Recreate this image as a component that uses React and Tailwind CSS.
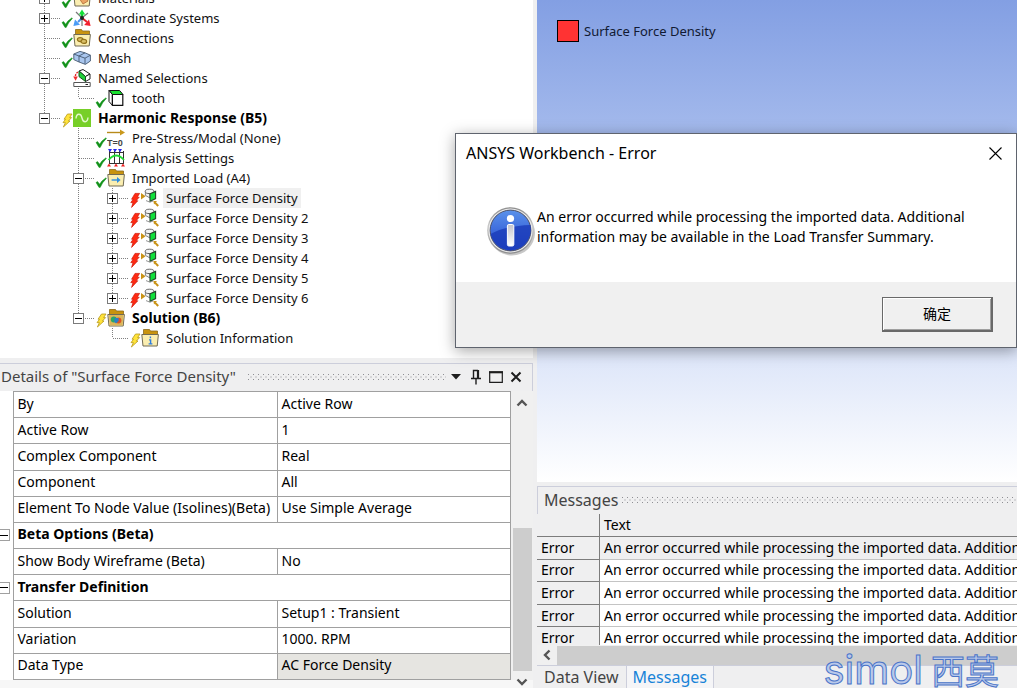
import { useState } from 'react';

const TREE = [
  { label: 'Materials', level: 0, icon: 'materials', status: 'ok', box: '+', guides: ['full'] },
  { label: 'Coordinate Systems', level: 0, icon: 'axes', status: 'ok', box: '+', guides: ['full'] },
  { label: 'Connections', level: 0, icon: 'connections', status: 'ok', guides: ['full'] },
  { label: 'Mesh', level: 0, icon: 'mesh', status: 'ok', guides: ['full'] },
  { label: 'Named Selections', level: 0, icon: 'named', box: '-', guides: ['full'] },
  { label: 'tooth', level: 1, icon: 'cube', status: 'ok', guides: ['line', 'end'] },
  { label: 'Harmonic Response (B5)', level: 0, icon: 'harmonic', status: 'bolt', box: '-', bold: true, guides: ['end'] },
  { label: 'Pre-Stress/Modal (None)', level: 1, icon: 'prestress', status: 'ok', guides: ['none', 'full'] },
  { label: 'Analysis Settings', level: 1, icon: 'settings', status: 'ok', guides: ['none', 'full'] },
  { label: 'Imported Load (A4)', level: 1, icon: 'imported', status: 'ok', box: '-', guides: ['none', 'full'] },
  { label: 'Surface Force Density', level: 2, icon: 'force', status: 'fail', box: '+', guides: ['none', 'line', 'full'] },
  { label: 'Surface Force Density 2', level: 2, icon: 'force', status: 'fail', box: '+', guides: ['none', 'line', 'full'] },
  { label: 'Surface Force Density 3', level: 2, icon: 'force', status: 'fail', box: '+', guides: ['none', 'line', 'full'] },
  { label: 'Surface Force Density 4', level: 2, icon: 'force', status: 'fail', box: '+', guides: ['none', 'line', 'full'] },
  { label: 'Surface Force Density 5', level: 2, icon: 'force', status: 'fail', box: '+', guides: ['none', 'line', 'full'] },
  { label: 'Surface Force Density 6', level: 2, icon: 'force', status: 'fail', box: '+', guides: ['none', 'line', 'end'] },
  { label: 'Solution (B6)', level: 1, icon: 'solution', status: 'bolt', box: '-', bold: true, guides: ['none', 'end'] },
  { label: 'Solution Information', level: 2, icon: 'info', status: 'bolt', guides: ['none', 'none', 'end'] },
];

const DETAILS = [
  { name: 'By', value: 'Active Row' },
  { name: 'Active Row', value: '1' },
  { name: 'Complex Component', value: 'Real' },
  { name: 'Component', value: 'All' },
  { name: 'Element To Node Value (Isolines)(Beta)', value: 'Use Simple Average' },
  { group: 'Beta Options (Beta)' },
  { name: 'Show Body Wireframe (Beta)', value: 'No' },
  { group: 'Transfer Definition' },
  { name: 'Solution', value: 'Setup1 : Transient' },
  { name: 'Variation', value: '1000. RPM' },
  { name: 'Data Type', value: 'AC Force Density', locked: true },
];

const MESSAGES = Array.from({ length: 5 }, () => ({
  kind: 'Error',
  text: 'An error occurred while processing the imported data. Additional information may be available in the Load Transfer Summary.',
}));

export default function App() {
  const [selected, setSelected] = useState('Surface Force Density');
  const [open, setOpen] = useState(true);

  return (
    <div className="relative flex h-screen overflow-hidden bg-[#efeff0] font-['Noto_Sans','Noto_Sans_CJK_SC',sans-serif] text-sm text-black">
      <div className="flex w-[533px] shrink-0 flex-col">
        <Outline selected={selected} onSelect={setSelected} />
        <Details />
      </div>
      <div className="ml-1 flex min-w-0 flex-1 flex-col">
        <Viewport />
        <Messages />
      </div>
      {open && <ErrorDialog onClose={() => setOpen(false)} />}
      <Watermark />
    </div>
  );
}

function Outline({ selected, onSelect }) {
  return (
    <section className="min-h-0 flex-1 overflow-hidden bg-white">
      <ul className="-mt-3 pl-[27px]">
        {TREE.map((node) => (
          <li key={node.label} className="flex h-5 items-center">
            {node.guides.map((kind, i) => (
              <Guide key={i} kind={kind} own={i === node.level} box={i === node.level ? node.box : null} label={node.label} />
            ))}
            <StatusIcon kind={node.status} />
            <NodeIcon kind={node.icon} />
            <button
              type="button"
              onClick={() => onSelect(node.label)}
              className={`ml-1 px-[3px] text-left leading-5 whitespace-nowrap ${
                node.bold ? 'text-sm font-bold' : 'text-[13px] text-[#111]'
              } ${selected === node.label ? 'bg-[#f0f0f0]' : ''}`}
            >
              {node.label}
            </button>
          </li>
        ))}
      </ul>
    </section>
  );
}

function Guide({ kind, own, box, label }) {
  const art = (
    <svg viewBox="0 0 34 20" className="h-5 w-[34px]" fill="none" shapeRendering="crispEdges">
      {kind !== 'none' && (
        <path d={kind === 'end' ? 'M17.5 0V10' : 'M17.5 0V20'} stroke="#808080" strokeDasharray="1 1" />
      )}
      {own && <path d="M18 10.5H36" stroke="#808080" strokeDasharray="1 1" />}
      {box && (
        <>
          <rect x="12.5" y="5.5" width="10" height="10" fill="#fff" stroke="#7b7b7b" />
          <path d={box === '+' ? 'M14 10.5h7M17.5 7v7' : 'M14 10.5h7'} stroke="#000" />
        </>
      )}
    </svg>
  );
  if (!box) return <span className="w-[34px] shrink-0">{art}</span>;
  return (
    <button type="button" aria-label={`Toggle ${label}`} className="w-[34px] shrink-0">
      {art}
    </button>
  );
}

function StatusIcon({ kind }) {
  return (
    <svg viewBox="0 0 12 20" className="h-5 w-3 shrink-0 overflow-visible">
      {kind === 'ok' && (
        <path d="M1 14.5 2.6 13.6 4.6 16.2Q7 12.2 11 9.8L11.4 10.4Q7.6 14 5.2 19.4H4Z" fill="#12921a" stroke="#12921a" strokeWidth=".5" />
      )}
      {kind === 'bolt' && (
        <path d="M6.5 6H11L8.6 9.6H10.6L7.4 13H9L2.4 19 4.4 14.6H2L4.6 11.2H3Z" fill="#ffe33a" stroke="#b99a1c" strokeWidth=".8" />
      )}
      {kind === 'fail' && (
        <path d="M6 5.4H10.6L8.2 9.2H10.2L7 12.8H8.8L2.6 19.4 4 14.6H1.8L4.2 11.2H2.6Z" fill="#ff2a12" stroke="#cf1404" strokeWidth=".7" />
      )}
    </svg>
  );
}

function Folder({ children }) {
  return (
    <>
      <path d="M2.5 6V1.5H8.5L9.5 3H16.5V7H2.5Z" fill="#c8930f" stroke="#8b6a1c" strokeWidth=".8" />
      <path d="M.8 6.5H17.4L16.2 18H2Z" fill="#fbeeb0" stroke="#706a55" />
      {children}
    </>
  );
}

function NodeIcon({ kind }) {
  return (
    <svg viewBox="0 0 18 20" className="h-5 w-[18px] shrink-0" fill="none">
      {kind === 'materials' && (
        <Folder>
          <path d="M6 10 12 8 15 13 10 16Z" fill="#eba565" stroke="#b06b35" strokeWidth=".8" />
        </Folder>
      )}
      {kind === 'axes' && (
        <>
          <path d="M3 4 8 9M15 5 10 9M9 10V18" stroke="#777" strokeWidth="1.2" />
          <path d="M9 10V4" stroke="#14c832" strokeWidth="2.4" />
          <path d="M5.8 6.6 9 1.4 12.2 6.6Z" fill="#14e03a" />
          <path d="M9 10 14 14" stroke="#e2202a" strokeWidth="2" />
          <path d="M17.6 18 11.2 17 16 11.4Z" fill="#f3202e" />
          <path d="M9 10 5 14" stroke="#4a90e8" strokeWidth="2" />
          <path d="M.4 18 2 11.6 7 16.8Z" fill="#4a9cf5" />
          <circle cx="9" cy="10" r="2" fill="#222" />
        </>
      )}
      {kind === 'connections' && (
        <Folder>
          <ellipse cx="7.2" cy="11.6" rx="2.8" ry="2" fill="#d9bf66" stroke="#94731a" strokeWidth="1.2" />
          <ellipse cx="10.8" cy="13.4" rx="2.8" ry="2" fill="#d9bf66" stroke="#94731a" strokeWidth="1.2" />
        </Folder>
      )}
      {kind === 'mesh' && (
        <g stroke="#44586f" strokeWidth=".9" strokeLinejoin="round">
          <path d="M.8 6 7 3.4 12 4.8 17.4 7.2V13L12.4 16.4 6 14 .8 11.6Z" fill="#a9c6ee" />
          <path d="M.8 6 6 8 12 10.2V16M6 8V14M6 8 12 4.8M12 10.2 17.4 7.2" />
        </g>
      )}
      {kind === 'named' && (
        <>
          <path d="M.8 14.5H17.2V18.5H.8Z" fill="#fff" stroke="#555" />
          <path d="M12.5 16.5H15" stroke="#222" />
          <path d="M6 3 10 1.5 17 6 12.5 8.5Z" fill="#fff" stroke="#222" />
          <path d="M12.5 8.5 17 6V11L12.5 13.5Z" fill="#fff" stroke="#222" />
          <path d="M6 3 12.5 8.5V13.5L6 8.6Z" fill="#21d03a" stroke="#174d1d" />
          <path d="M5 4Q2 5.6 2.4 10" stroke="#e32727" strokeWidth="1.4" strokeDasharray="2 1" />
          <path d="M.2 8.6H4.8L2.6 12.8Z" fill="#f02d2d" />
        </>
      )}
      {kind === 'cube' && (
        <g stroke="#111" strokeLinejoin="round">
          <path d="M2 2.5H12.6L16 6.5H5.4Z" fill="#19df2f" />
          <path d="M2 2.5V13.5L5.4 17.4V6.5Z" fill="#fff" />
          <path d="M5.4 6.5H15.8V17.4H5.4Z" fill="#fff" strokeWidth="1.2" />
        </g>
      )}
      {kind === 'harmonic' && (
        <>
          <rect y="1" width="18" height="18" fill="#77cf28" />
          <path d="M3 10.5C3.5 5 8 5 9 10S14.5 15 15 9.5" stroke="#e3f8cc" strokeWidth="1.4" />
        </>
      )}
      {kind === 'prestress' && (
        <>
          <path d="M0 4.5H14" stroke="#b78a1a" strokeWidth="1.4" />
          <path d="M13 1.5 18 4.5 13 7.5Z" fill="#c9981c" />
          <text x="0" y="17.5" fontSize="9" fontWeight="700" fill="#444" fontFamily="Liberation Sans, sans-serif">
            T=0
          </text>
        </>
      )}
      {kind === 'settings' && (
        <>
          <path d="M2.5 3V16M7.5 3V16M12.5 3V16M16.5 3V16M2 4.5H17M2 15.5H17" stroke="#333" />
          <path d="M1.6 12Q9 3 17 12" stroke="#20d832" strokeWidth="1.8" />
          <path d="M1 1H5L3 4.2ZM6 1H10L8 4.2ZM11 1H15L13 4.2Z" fill="#2525f0" />
          <path d="M0 18.5 2 15.5 4 18.5ZM7 18.5 9 15.5 11 18.5ZM14 18.5 16 15.5 18 18.5Z" fill="#f02020" />
        </>
      )}
      {kind === 'imported' && (
        <Folder>
          <path d="M4.6 12H11" stroke="#2d8de0" strokeWidth="1.4" />
          <path d="M10 9 13.6 12 10 15Z" fill="#2d8de0" />
        </Folder>
      )}
      {kind === 'force' && (
        <>
          <path d="M0 5 4.6 8.2 0 11.4Z" fill="#c99316" />
          <path d="M4.4 3.6V7.4L9 10V6Z" fill="#f2f2f2" stroke="#777" strokeWidth=".9" />
          <ellipse cx="8.6" cy="3.4" rx="4.4" ry="2.2" fill="#f2f2f2" stroke="#555" strokeWidth=".9" />
          <path d="M9 5.8 14.6 3.4V10.6L9 13.4Z" fill="#10e03a" stroke="#23452a" strokeWidth="1.1" />
          <path d="M5 12.6 9 14.2 12 13" stroke="#888" strokeWidth=".9" />
          <path d="M12.4 13H16L13 16.4Z" fill="#c99316" />
          <path d="M14 14.6 17.2 18" stroke="#c99316" strokeWidth="2" />
        </>
      )}
      {kind === 'solution' && (
        <Folder>
          <path d="M2 7H16.5L15.6 17.4H2.6Z" fill="#dcb65a" />
          <circle cx="6.8" cy="11.4" r="3" fill="#2aa869" />
          <circle cx="11.4" cy="12.6" r="3" fill="#dd5426" />
          <path d="M8 10H11.6V13L9 15.6 7 13.4Z" fill="#2c7fc7" />
        </Folder>
      )}
      {kind === 'info' && (
        <Folder>
          <path d="M9.4 8.6V10.2M8 11.9H9.6V15.6M7.6 15.9H11.4" stroke="#2d7de0" strokeWidth="1.4" />
        </Folder>
      )}
    </svg>
  );
}

function Grip({ id }) {
  return (
    <svg className="h-[7px] min-w-0 flex-1" aria-hidden="true">
      <pattern id={id} width="5" height="5" patternUnits="userSpaceOnUse">
        <path d="M0 0h1v1H0zM2.5 2.5h1v1h-1z" fill="#8f8f94" />
      </pattern>
      <rect width="100%" height="6" fill={`url(#${id})`} />
    </svg>
  );
}

function Details() {
  return (
    <section className="shrink-0">
      <header className="mt-[5px] flex h-7 items-center border-t border-r border-[#cccedb] pr-[6px] pb-px pl-px">
        <h2 className="mr-3 text-[15px] text-[#444]">Details of "Surface Force Density"</h2>
        <Grip id="grip-details" />
        <div className="flex items-center text-[#1e1e1e]">
          <button type="button" aria-label="Window position" className="flex w-5 justify-center">
            <svg viewBox="0 0 10 6" className="h-[6px] w-[10px]">
              <path d="M0 0H10L5 5.5Z" fill="currentColor" />
            </svg>
          </button>
          <button type="button" aria-label="Auto hide" className="flex w-5 justify-center">
            <svg viewBox="0 0 12 16" className="h-4 w-3" fill="none" stroke="currentColor">
              <path d="M3.5 9V1.5H8M1 9.5H11M6 10V15.5" strokeWidth="1.4" />
              <path d="M8 1V9" strokeWidth="2.2" />
            </svg>
          </button>
          <button type="button" aria-label="Maximize" className="flex w-5 justify-center">
            <svg viewBox="0 0 14 12" className="h-3 w-[14px]" fill="none" stroke="currentColor">
              <path d="M.7 1V11.4H13.3V1" strokeWidth="1.2" />
              <path d="M0 1.2H14" strokeWidth="2.2" />
            </svg>
          </button>
          <button type="button" aria-label="Close details" className="flex w-5 justify-center">
            <svg viewBox="0 0 12 12" className="h-3 w-3" fill="none" stroke="currentColor">
              <path d="M1.5 1.5 10.5 10.5M10.5 1.5 1.5 10.5" strokeWidth="2" />
            </svg>
          </button>
        </div>
      </header>
      <div className="flex bg-white">
        <table className="h-[289px] w-[511px] table-fixed border-collapse">
          <colgroup>
            <col className="w-[13px]" />
            <col className="w-[264px]" />
            <col />
          </colgroup>
          <tbody>
            {DETAILS.map((row) => (
              <tr key={row.group || row.name}>
                <td className="p-0">
                  {row.group && (
                    <button
                      type="button"
                      aria-label={`Collapse ${row.group}`}
                      className="flex h-3 w-[10px] items-center border border-l-0 border-[#a0a0a0]"
                    >
                      <span className="h-px w-2 bg-black" />
                    </button>
                  )}
                </td>
                {row.group ? (
                  <th colSpan={2} className="border border-[#a0a0a0] p-0 pb-[2px] pl-1 text-left leading-5 font-bold">
                    {row.group}
                  </th>
                ) : (
                  <>
                    <th className="border border-[#a0a0a0] p-0 pb-[2px] pl-1 text-left leading-5 font-normal whitespace-nowrap">
                      {row.name}
                    </th>
                    <td className={`border border-[#a0a0a0] p-0 pb-[2px] pl-1 leading-5 ${row.locked ? 'bg-[#e6e5e1]' : ''}`}>
                      {row.value}
                    </td>
                  </>
                )}
              </tr>
            ))}
          </tbody>
        </table>
        <div className="flex flex-1 flex-col items-center bg-[#f0f0f0] pt-2">
          <Chevron className="h-2 w-3" />
          <div className="min-h-0 flex-1" />
          <div className="h-[143px] w-[19px] bg-[#cdcdcd]" />
          <Chevron className="mt-[7px] mb-[-6px] h-2 w-3 rotate-180" />
        </div>
      </div>
      <div className="h-2 bg-[#f7f7f7]" />
    </section>
  );
}

function Chevron({ className }) {
  return (
    <svg viewBox="0 0 12 8" className={className} fill="none">
      <path d="M1.5 6.5 6 2 10.5 6.5" stroke="#555" strokeWidth="2.4" />
    </svg>
  );
}

function Viewport() {
  return (
    <main className="min-h-0 flex-1 bg-linear-to-b from-[#839fe3] to-white">
      <div className="flex items-center gap-[5px] pt-5 pl-5">
        <span className="size-[22px] border border-black bg-[#ff3333]" />
        <span className="text-[13px] text-[#111a33]">Surface Force Density</span>
      </div>
    </main>
  );
}

function Messages() {
  return (
    <section className="shrink-0">
      <header className="mt-1 flex h-7 items-center border-t border-l border-[#cccedb] pb-px pl-[6px]">
        <h2 className="mr-1 text-base text-[#444]">Messages</h2>
        <Grip id="grip-messages" />
      </header>
      <div className="h-[131px] overflow-hidden">
        <table className="h-[136px] w-full table-fixed border-separate border-spacing-0">
          <colgroup>
            <col className="w-[63px]" />
            <col />
          </colgroup>
          <thead>
            <tr className="h-[23px]">
              <th className="border-r border-b border-[#7c7c7c] p-0" />
              <th className="border-b border-[#7c7c7c] p-0 pl-1 text-left leading-5 font-normal">Text</th>
            </tr>
          </thead>
          <tbody>
            {MESSAGES.map((m, i) => (
              <tr key={i} className={i === 0 ? '' : 'bg-white'}>
                <td className="border-r border-b border-[#7c7c7c] bg-[#efeff0] p-0 pl-1 leading-5">{m.kind}</td>
                <td className="overflow-hidden border-b border-[#c4c4c4] p-0 pl-1 leading-5 whitespace-nowrap">{m.text}</td>
              </tr>
            ))}
          </tbody>
        </table>
      </div>
      <div className="flex h-5 items-center bg-[#f0f0f0]">
        <Chevron className="mx-1 h-2 w-3 -rotate-90" />
        <div className="h-[19px] flex-1 bg-[#cdcdcd]" />
      </div>
      <nav className="flex h-[23px] border-t border-[#cccedb] text-base leading-[22px]">
        <button type="button" className="border-r border-[#cccedb] px-[7px] text-[#444]">
          Data View
        </button>
        <button type="button" className="border-r border-[#cccedb] bg-[#f5f5f7] px-[6px] text-[#1883d7]">
          Messages
        </button>
      </nav>
    </section>
  );
}

function ErrorDialog({ onClose }) {
  return (
    <div
      role="dialog"
      aria-labelledby="error-title"
      className="absolute top-[133px] right-0 w-[562px] border border-[#5f646e] bg-white shadow-[0_3px_14px_rgba(0,0,0,0.35)]"
    >
      <div className="flex h-[38px] items-center justify-between pr-[14px] pl-[10px]">
        <h1 id="error-title" className="text-base">
          ANSYS Workbench - Error
        </h1>
        <button type="button" aria-label="Close" onClick={onClose}>
          <svg viewBox="0 0 13 13" className="size-[13px]" fill="none" stroke="#000">
            <path d="M.5.5 12.5 12.5M12.5.5.5 12.5" strokeWidth="1.1" />
          </svg>
        </button>
      </div>
      <div className="flex h-[110px] items-start pt-[35px] pl-[30px]">
        <InfoBadge />
        <p className="w-[440px] leading-5">
          An error occurred while processing the imported data. Additional information may be available in the Load
          Transfer Summary.
        </p>
      </div>
      <div className="flex h-[65px] items-center justify-end bg-[#f0f0f0] pr-[23px]">
        <button
          type="button"
          onClick={onClose}
          className="h-[35px] w-[111px] border border-r-2 border-b-2 border-[#696969] bg-[#f0f0f0] shadow-[inset_1px_1px_0_#fff,inset_-1px_-1px_0_#a0a0a0]"
        >
          确定
        </button>
      </div>
    </div>
  );
}

function InfoBadge() {
  return (
    <svg viewBox="0 0 50 50" className="mr-px size-[50px] shrink-0">
      <defs>
        <linearGradient id="ring" x1="0" y1="0" x2="0" y2="1">
          <stop offset="0" stopColor="#8c8c8c" />
          <stop offset=".4" stopColor="#c8c8c8" />
          <stop offset="1" stopColor="#8c8c8c" />
        </linearGradient>
        <linearGradient id="ball" x1="0" y1="0" x2="0" y2="1">
          <stop offset="0" stopColor="#5b92ea" />
          <stop offset="1" stopColor="#2145cf" />
        </linearGradient>
        <linearGradient id="stem" x1="0" y1="0" x2="0" y2="1">
          <stop offset="0" stopColor="#c4c4cc" />
          <stop offset="1" stopColor="#fff" />
        </linearGradient>
      </defs>
      <ellipse cx="26" cy="26" rx="23" ry="22.5" fill="#000" opacity=".22" />
      <circle cx="24.5" cy="23.5" r="23.3" fill="url(#ring)" />
      <circle cx="24.5" cy="23.5" r="22" fill="#ececec" />
      <circle cx="24.5" cy="23.5" r="20.4" fill="url(#ball)" stroke="#4a4f66" />
      <path d="M4.6 27Q18 19 44.4 18A20 20 0 0 1 4.6 27Z" fill="#1a3bb8" opacity=".8" />
      <circle cx="24.5" cy="11.5" r="3.6" fill="#fff" />
      <rect x="21.4" y="17.5" width="6.4" height="21.5" rx="1.4" fill="url(#stem)" stroke="#fff" strokeWidth="1" />
    </svg>
  );
}

function Watermark() {
  return (
    <div className="pointer-events-none absolute right-[18px] bottom-0 flex items-center gap-2 text-[#b9c9ea] [-webkit-text-stroke:1px_#4a74c8]">
      <span className="font-['Inter',sans-serif] text-[40px] leading-9">simol</span>
      <span className="font-['Noto_Sans_CJK_SC',sans-serif] text-[34px] leading-9">西莫</span>
    </div>
  );
}
